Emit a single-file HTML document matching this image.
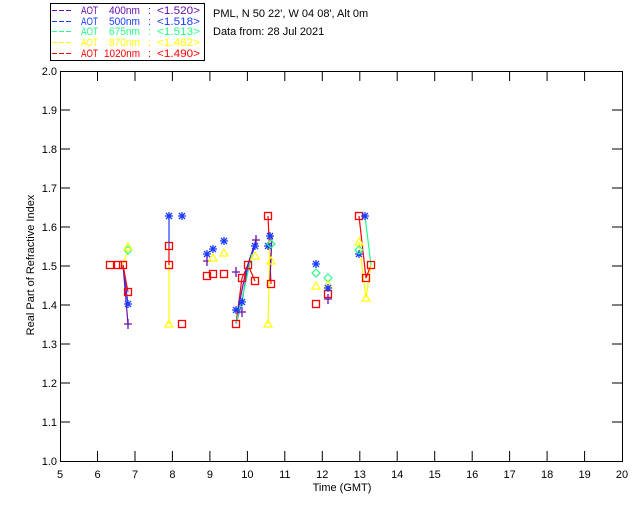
<!DOCTYPE html><html><head><style>body{margin:0;background:#fff}svg{display:block}text{font-family:"Liberation Sans",sans-serif;font-size:11px}</style></head><body>
<svg width="640" height="512" xmlns="http://www.w3.org/2000/svg">
<defs>
<g id="sq"><rect x="-3.5" y="-3.5" width="7" height="7" fill="none" stroke="#f00" stroke-width="1.3"/></g>
<g id="st"><path d="M-4 0H4M0-4V4M-3-3L3 3M-3 3L3-3" stroke="#1a3cff" stroke-width="1.3"/></g>
<g id="pl"><path d="M-4 0H4M0-5V5" stroke="#6a0dad" stroke-width="1.3"/></g>
<g id="tr"><path d="M0-4L4 3H-4Z" fill="none" stroke="#ff0" stroke-width="1.2"/></g>
<g id="di"><path d="M0-4L4 0 0 4-4 0Z" fill="none" stroke="#2f8" stroke-width="1.2"/></g>
</defs>
<rect x="50.5" y="3.5" width="154" height="57" fill="#fff" stroke="#000"/>
<g stroke-dasharray="5 2" stroke-width="1">
<path d="M52 10.5H73" stroke="#6a0dad"/><path d="M52 21.5H73" stroke="#1a3cff"/><path d="M52 31.5H73" stroke="#2f8"/><path d="M52 42.5H73" stroke="#ff0"/><path d="M52 53.5H73" stroke="#f00"/>
</g>
<g fill="#6a0dad"><text x="81" y="14" textLength="17" lengthAdjust="spacingAndGlyphs">AOT</text><text x="109" y="14" textLength="31" lengthAdjust="spacingAndGlyphs">400nm</text><text x="148" y="14">:</text><text x="157" y="14" textLength="43" lengthAdjust="spacingAndGlyphs">&lt;1.520&gt;</text></g>
<g fill="#1a3cff"><text x="81" y="25" textLength="17" lengthAdjust="spacingAndGlyphs">AOT</text><text x="109" y="25" textLength="31" lengthAdjust="spacingAndGlyphs">500nm</text><text x="148" y="25">:</text><text x="157" y="25" textLength="43" lengthAdjust="spacingAndGlyphs">&lt;1.518&gt;</text></g>
<g fill="#2f8"><text x="81" y="35" textLength="17" lengthAdjust="spacingAndGlyphs">AOT</text><text x="109" y="35" textLength="31" lengthAdjust="spacingAndGlyphs">675nm</text><text x="148" y="35">:</text><text x="157" y="35" textLength="43" lengthAdjust="spacingAndGlyphs">&lt;1.513&gt;</text></g>
<g fill="#ff0"><text x="81" y="46" textLength="17" lengthAdjust="spacingAndGlyphs">AOT</text><text x="109" y="46" textLength="31" lengthAdjust="spacingAndGlyphs">870nm</text><text x="148" y="46">:</text><text x="157" y="46" textLength="43" lengthAdjust="spacingAndGlyphs">&lt;1.482&gt;</text></g>
<g fill="#f00"><text x="81" y="57" textLength="17" lengthAdjust="spacingAndGlyphs">AOT</text><text x="104" y="57" textLength="36" lengthAdjust="spacingAndGlyphs">1020nm</text><text x="148" y="57">:</text><text x="157" y="57" textLength="43" lengthAdjust="spacingAndGlyphs">&lt;1.490&gt;</text></g>
<text x="213" y="17">PML, N 50 22', W 04 08', Alt 0m</text>
<text x="213" y="35">Data from: 28 Jul 2021</text>
<rect x="60.5" y="71.5" width="562" height="390" fill="none" stroke="#000"/>
<g stroke="#000">
<path d="M60 110h10M60 149h10M60 188h10M60 227h10M60 266h10M60 305h10M60 344h10M60 383h10M60 422h10M622 110h-10M622 149h-10M622 188h-10M622 227h-10M622 266h-10M622 305h-10M622 344h-10M622 383h-10M622 422h-10"/>
<path d="M97.5 461v-10M135 461v-10M172.4 461v-10M209.9 461v-10M247.4 461v-10M284.8 461v-10M322.3 461v-10M359.8 461v-10M397.2 461v-10M434.7 461v-10M472.2 461v-10M509.6 461v-10M547.1 461v-10M584.6 461v-10M97.5 71v10M135 71v10M172.4 71v10M209.9 71v10M247.4 71v10M284.8 71v10M322.3 71v10M359.8 71v10M397.2 71v10M434.7 71v10M472.2 71v10M509.6 71v10M547.1 71v10M584.6 71v10"/>
</g>
<g text-anchor="end">
<text x="57" y="465">1.0</text><text x="57" y="426">1.1</text><text x="57" y="387">1.2</text><text x="57" y="348">1.3</text><text x="57" y="309">1.4</text><text x="57" y="270">1.5</text><text x="57" y="231">1.6</text><text x="57" y="192">1.7</text><text x="57" y="153">1.8</text><text x="57" y="114">1.9</text><text x="57" y="75">2.0</text>
</g>
<g text-anchor="middle">
<text x="60" y="478">5</text><text x="97.5" y="478">6</text><text x="135" y="478">7</text><text x="172.4" y="478">8</text><text x="209.9" y="478">9</text><text x="247.4" y="478">10</text><text x="284.8" y="478">11</text><text x="322.3" y="478">12</text><text x="359.8" y="478">13</text><text x="397.2" y="478">14</text><text x="434.7" y="478">15</text><text x="472.2" y="478">16</text><text x="509.6" y="478">17</text><text x="547.1" y="478">18</text><text x="584.6" y="478">19</text><text x="622" y="478">20</text>
<text x="342" y="491">Time (GMT)</text>
<text transform="translate(34 265) rotate(-90)">Real Part of Refractive Index</text>
</g>
<g fill="none" stroke-width="1.2">
<path d="M123 265L128 324" stroke="#6a0dad"/>
<path d="M123 265L128 304" stroke="#1a3cff"/>
<path d="M123 265L128 292" stroke="#f00"/>
<path d="M123 265L128 250" stroke="#ff0"/>
<path d="M169 216V246" stroke="#1a3cff"/><path d="M169 246V265" stroke="#f00"/><path d="M169 265V324" stroke="#ff0"/>
<path d="M236 324L242 302L248 265L255 246" stroke="#1a3cff"/>
<path d="M236 324L242 278L248 265L255 281" stroke="#f00"/>
<path d="M238 310L246 270L256 240" stroke="#6a0dad"/>
<path d="M236 324L244 290L252 254" stroke="#2f8"/>
<path d="M268 216L271 284" stroke="#f00"/><path d="M270 236L268 324" stroke="#ff0"/><path d="M272 236L270 280" stroke="#6a0dad"/>
<path d="M359 216L366 278L371 265" stroke="#f00"/><path d="M365 216L371 265" stroke="#2f8"/><path d="M359 242L366 298L371 265" stroke="#ff0"/>
</g>
<use href="#sq" x="110" y="265"/><use href="#sq" x="118" y="265"/><use href="#sq" x="123" y="265"/>
<use href="#di" x="128" y="250"/><use href="#tr" x="128" y="247"/>
<use href="#pl" x="128" y="324"/><use href="#st" x="128" y="304"/><use href="#sq" x="128" y="292"/>
<use href="#st" x="169" y="216"/><use href="#st" x="182" y="216"/><use href="#sq" x="169" y="246"/><use href="#sq" x="169" y="265"/><use href="#tr" x="169" y="324"/><use href="#sq" x="182" y="324"/>
<use href="#st" x="207" y="254"/><use href="#st" x="213" y="249"/><use href="#st" x="224" y="241"/><use href="#pl" x="207" y="261"/><use href="#tr" x="213" y="258"/><use href="#tr" x="224" y="253"/>
<use href="#sq" x="207" y="276"/><use href="#sq" x="213" y="274"/><use href="#sq" x="224" y="274"/>
<use href="#sq" x="236" y="324"/><use href="#st" x="236" y="310"/><use href="#st" x="242" y="302"/><use href="#sq" x="242" y="278"/><use href="#sq" x="248" y="265"/><use href="#st" x="255" y="246"/><use href="#sq" x="255" y="281"/><use href="#pl" x="256" y="240"/><use href="#pl" x="236" y="272"/><use href="#tr" x="255" y="256"/><use href="#pl" x="242" y="312"/>
<use href="#sq" x="268" y="216"/><use href="#st" x="270" y="236"/><use href="#st" x="268" y="246"/><use href="#tr" x="271" y="261"/><use href="#sq" x="271" y="284"/><use href="#tr" x="268" y="324"/><use href="#di" x="271" y="244"/>
<use href="#st" x="316" y="264"/><use href="#di" x="316" y="273"/><use href="#tr" x="316" y="286"/><use href="#sq" x="316" y="304"/>
<use href="#di" x="328" y="278"/><use href="#tr" x="328" y="285"/><use href="#sq" x="328" y="294"/><use href="#pl" x="328" y="299"/><use href="#st" x="328" y="288"/>
<use href="#sq" x="359" y="216"/><use href="#st" x="365" y="216"/><use href="#tr" x="359" y="242"/><use href="#st" x="359" y="254"/><use href="#di" x="359" y="250"/><use href="#sq" x="371" y="265"/><use href="#sq" x="366" y="278"/><use href="#tr" x="366" y="298"/>
</svg></body></html>
